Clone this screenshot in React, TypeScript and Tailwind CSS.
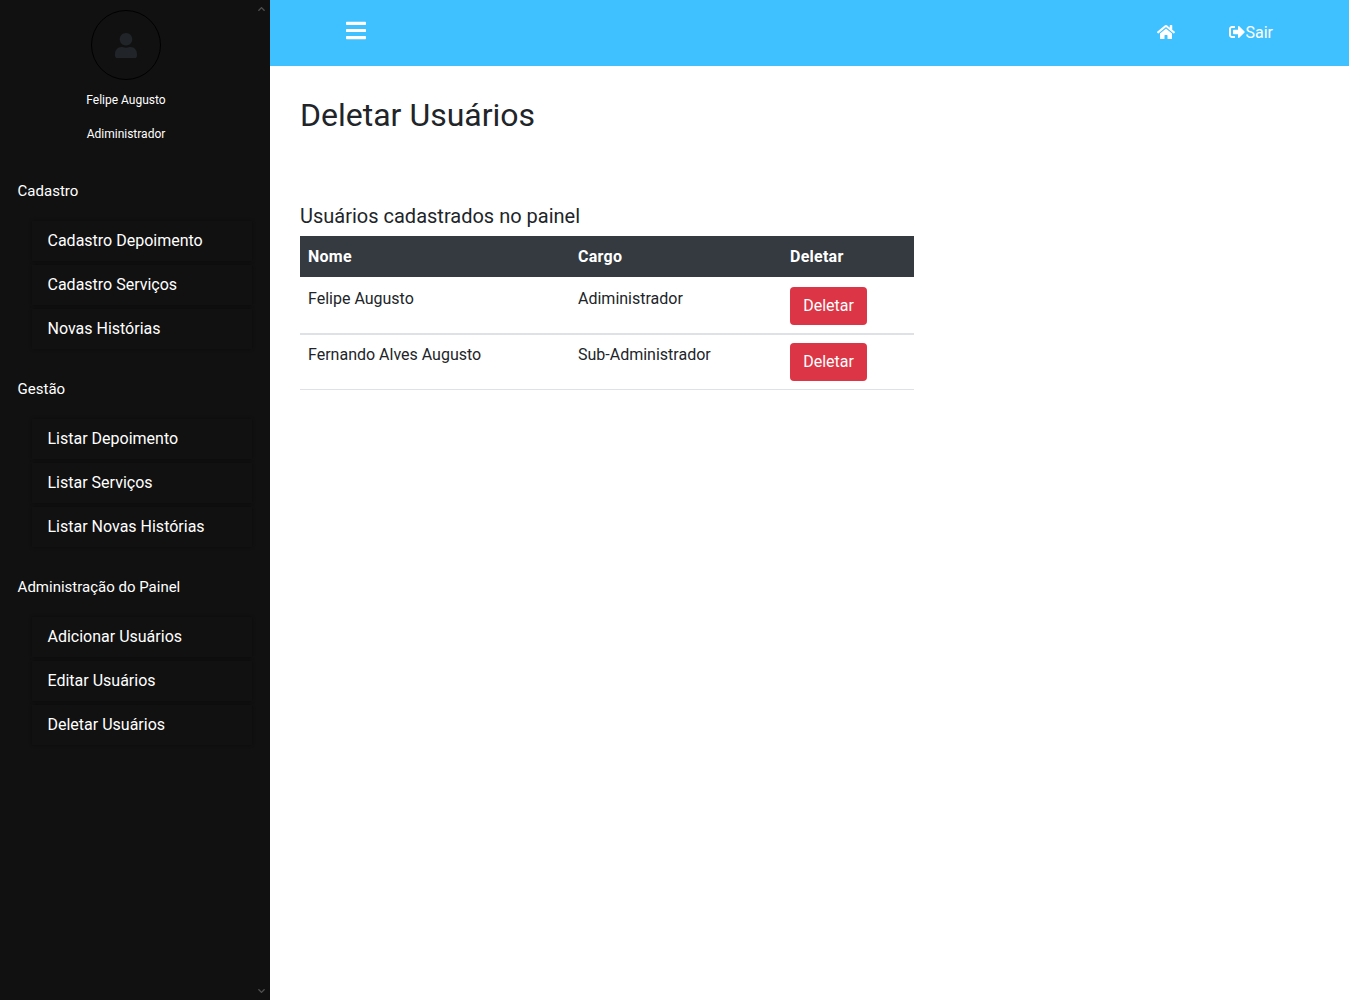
import { FaBars, FaHome, FaSignOutAlt, FaUser, FaChevronUp, FaChevronDown } from "react-icons/fa";

const MENU = [
  { title: "Cadastro", items: ["Cadastro Depoimento", "Cadastro Serviços", "Novas Histórias"] },
  { title: "Gestão", items: ["Listar Depoimento", "Listar Serviços", "Listar Novas Histórias"] },
  { title: "Administração do Painel", items: ["Adicionar Usuários", "Editar Usuários", "Deletar Usuários"] },
];

const USERS = [
  { name: "Felipe Augusto", role: "Adiministrador" },
  { name: "Fernando Alves Augusto", role: "Sub-Administrador" },
];

const Sidebar = () => (
  <aside className="relative h-[1000px] w-[270px] shrink-0 overflow-hidden bg-[#111111] text-white">
    <FaChevronUp className="absolute right-[4px] top-[5px] h-[8px] w-[9px] text-[#505050]" />
    <FaChevronDown className="absolute right-[4px] bottom-[5px] h-[8px] w-[9px] text-[#505050]" />
    <div className="flex w-[252px] flex-col items-center pt-[10px]">
      <div className="flex h-[70px] w-[70px] items-center justify-center rounded-full border border-black">
        <FaUser className="h-[25px] w-[22px] text-[#212529]" />
      </div>
      <p className="mt-[12px] text-xs leading-[16px]">Felipe Augusto</p>
      <p className="mt-[18px] text-xs leading-[16px]">Adiministrador</p>
    </div>
    <nav className="mt-[39px] pl-[17.6px]">
      {MENU.map((group) => (
        <div key={group.title} className="mb-[30px]">
          <h4 className="text-[15px] leading-[20px]">{group.title}</h4>
          <ul className="mt-[20px] ml-[14.4px] flex w-[220px] flex-col gap-[4px]">
            {group.items.map((item) => (
              <li
                key={item}
                className="h-[40px] bg-[#111111] pl-[15.5px] text-base leading-[40px] shadow-[0_0_3px_rgba(0,0,0,0.4)]"
              >
                {item}
              </li>
            ))}
          </ul>
        </div>
      ))}
    </nav>
  </aside>
);

const Topbar = () => (
  <header className="flex h-[66px] items-center bg-[#3fc1ff] text-white">
    <FaBars className="mb-[5px] ml-[76px] h-[23px] w-[20px]" />
    <FaHome className="mb-[2px] ml-auto h-[16px] w-[18px]" />
    <a className="mr-[76px] ml-[54px] flex items-center text-base">
      <FaSignOutAlt className="mb-[2px] h-[16px] w-[16px]" />
      <span>Sair</span>
    </a>
  </header>
);

export default function App() {
  return (
    <div
      className="flex h-[1000px] overflow-hidden bg-white text-[#212529]"
      style={{ fontFamily: "Roboto, sans-serif" }}
    >
      <Sidebar />
      <div className="flex-1">
        <Topbar />
        <main className="px-[30px] pt-[30px]">
          <h1 className="text-[32px] leading-[38px]">Deletar Usuários</h1>
          <h5 className="mt-[70px] text-xl leading-[24px]">Usuários cadastrados no painel</h5>
          <table className="mt-[8px] w-[614px] table-fixed border-collapse text-base">
            <thead>
              <tr className="h-[41px] bg-[#343a40] text-left tracking-[0.25px] text-white">
                <th className="w-[270px] px-2 font-bold">Nome</th>
                <th className="w-[212px] px-2 font-bold">Cargo</th>
                <th className="px-2 font-bold">Deletar</th>
              </tr>
            </thead>
            <tbody>
              <tr className="h-[57px] border-b-2 border-[#dee2e6]">
                <td className="px-2 pt-[10px] align-top leading-[24px]">{USERS[0].name}</td>
                <td className="px-2 pt-[10px] align-top leading-[24px]">{USERS[0].role}</td>
                <td className="px-2 align-top">
                  <button className="mt-[10px] h-[38px] w-[77px] rounded bg-[#dc3545] text-base text-white">
                    Deletar
                  </button>
                </td>
              </tr>
              <tr className="h-[55px] border-b border-[#dee2e6]">
                <td className="px-2 pt-[8px] align-top leading-[24px]">{USERS[1].name}</td>
                <td className="px-2 pt-[8px] align-top leading-[24px]">{USERS[1].role}</td>
                <td className="px-2 align-top">
                  <button className="mt-[8px] h-[38px] w-[77px] rounded bg-[#dc3545] text-base text-white">
                    Deletar
                  </button>
                </td>
              </tr>
            </tbody>
          </table>
        </main>
      </div>
    </div>
  );
}
